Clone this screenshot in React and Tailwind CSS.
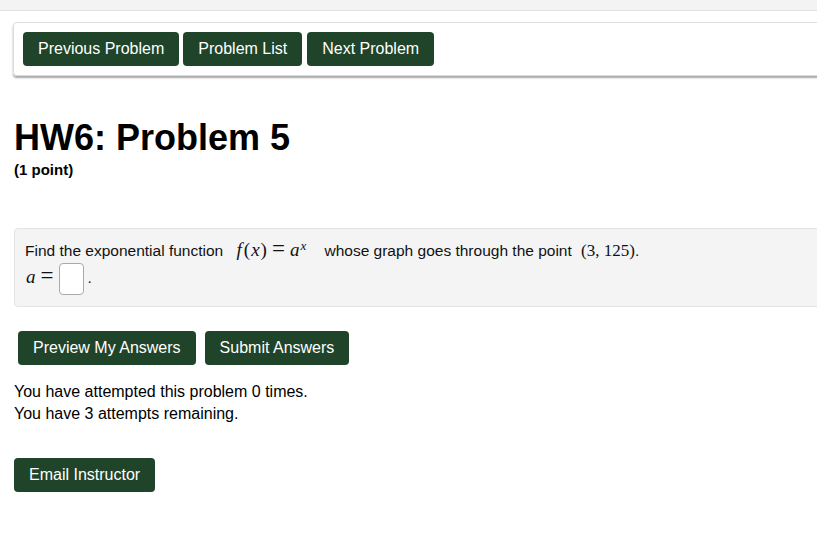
import React from 'react';

const sans = "font-['Liberation_Sans',Arial,sans-serif]";
const math = "font-['Liberation_Serif','DejaVu_Serif',serif] leading-[0]";

function GreenButton({ children, className = '' }) {
  return (
    <button
      className={`h-[34px] rounded-[4px] bg-[#1f4429] px-[15px] text-[16px] leading-none text-white ${className}`}
    >
      {children}
    </button>
  );
}

export default function App() {
  return (
    <div className={`min-h-[539px] w-[817px] overflow-hidden bg-white text-black ${sans}`}>
      <div className="h-[11px] border-b border-[#e2e2e2] bg-[#f3f3f3]" />

      <div className="ml-[13px] mt-[11px] w-[830px] rounded-[4px] border border-[#dcdcdc] p-[9px] shadow-[0_2px_2px_rgba(0,0,0,0.35)]">
        <div className="flex gap-[4px]">
          <GreenButton className="px-[15.5px]">Previous Problem</GreenButton>
          <GreenButton>Problem List</GreenButton>
          <GreenButton className="ml-[1px]">Next Problem</GreenButton>
        </div>
      </div>

      <div className="px-[14px]">
        <h1 className="mt-[40px] text-[36px] font-bold leading-[1.2]">HW6: Problem 5</h1>
        <div className="mt-[2px] text-[15px] font-bold leading-[18px]">(1 point)</div>

        <div className="mt-[49px] w-[830px] rounded-[4px] border border-[#e3e3e3] bg-[#f4f4f4] px-[10px] pb-[9px] pt-[11px] text-[15.5px] leading-[21px] text-[#111]">
          <div>
            Find the exponential function{' '}
            <span className={`${math} ml-[9px] mr-[14px] text-[19px]`}>
              <i className="mr-[2px]">f</i>(<i className="mx-[1px]">x</i>)
              <span className="mx-[5px] text-[23px]">=</span>
              <i>a</i>
              <sup className="ml-[1px] text-[13px]"><i>x</i></sup>
            </span>{' '}
            whose graph goes through the point{' '}
            <span className={`${math} ml-[5px] text-[17px]`}>(3, 125)</span>.
          </div>
          <div>
            <span className={`${math} text-[19px]`}>
              <i className="ml-[1px]">a</i>
              <span className="ml-[5px] text-[23px]">=</span>
            </span>
            <span className="ml-[6px] mr-[3px] my-[2px] inline-block h-[32px] w-[25px] rounded-[4px] border border-[#a9a9a9] bg-white align-middle" />
            .
          </div>
        </div>

        <div className="ml-[4px] mt-[24px] flex gap-[9px]">
          <GreenButton className="px-[14.5px]">Preview My Answers</GreenButton>
          <GreenButton className="px-[15.5px]">Submit Answers</GreenButton>
        </div>

        <div className="mt-[16px] text-[16px] leading-[22px]">
          <div>You have attempted this problem 0 times.</div>
          <div>You have 3 attempts remaining.</div>
        </div>

        <div className="mt-[33px]">
          <GreenButton>Email Instructor</GreenButton>
        </div>
      </div>
    </div>
  );
}
